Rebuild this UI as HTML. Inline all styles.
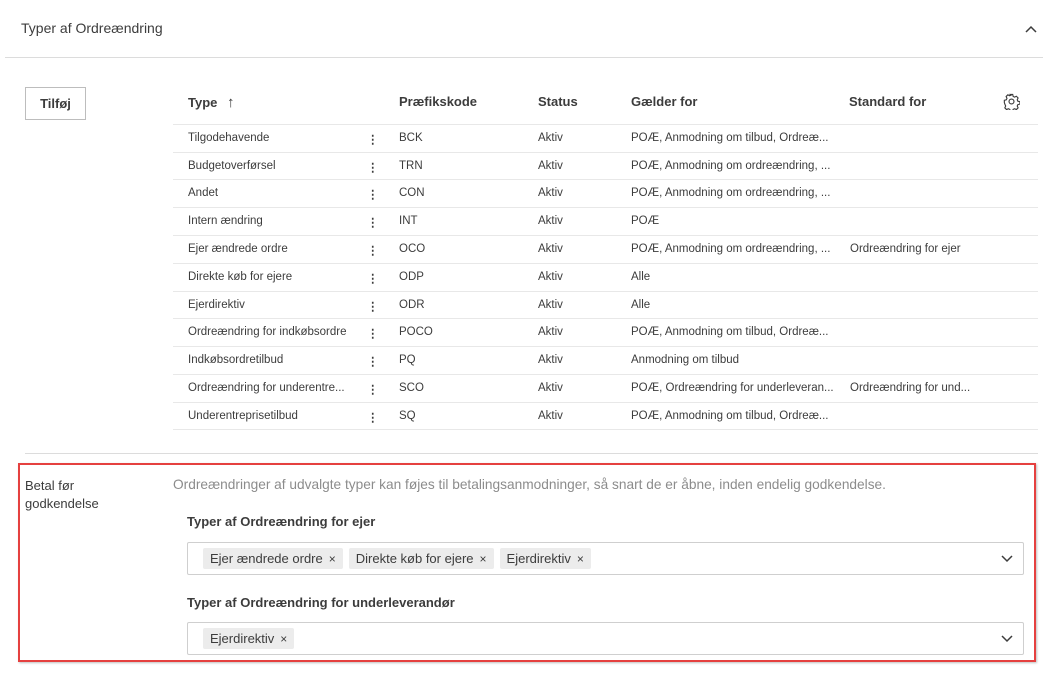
<!DOCTYPE html>
<html><head><meta charset="utf-8"><style>
*{margin:0;padding:0;box-sizing:border-box}
body{width:1050px;height:685px;background:#fff;font-family:"Liberation Sans",sans-serif;color:#3c3c3c;position:relative;overflow:hidden}
.a{position:absolute;white-space:nowrap}
.row{position:absolute;left:173px;width:865px;height:28px;border-top:1px solid #e8e8e8;font-size:11.5px;color:#3c3c3c}
.row span{position:absolute;top:7px}
.row span.d{left:194px;font-weight:bold}
.hd{position:absolute;top:94px;font-size:13px;font-weight:bold;color:#3c3c3c}
.chip{display:inline-block;background:#ececec;border-radius:2px;height:21px;line-height:21px;padding:0 7px;font-size:13px;color:#3c3c3c;margin-right:6px}
.chip i{font-style:normal;font-size:12px;margin-left:6px}
.sel{position:absolute;left:187px;width:837px;height:33px;border:1px solid #cfcfcf;border-radius:2px;padding:5px 0 0 15px}
</style></head><body>
<div class="a" style="left:21px;top:20px;font-size:14px;color:#3c3c3c">Typer af Ordreændring</div>
<svg class="a" style="left:1024px;top:24px" width="14" height="10" viewBox="0 0 14 10"><path d="M2 8 L7 3 L12 8" fill="none" stroke="#3c3c3c" stroke-width="1.5"/></svg>
<div class="a" style="left:5px;top:57px;width:1038px;height:1px;background:#dcdcdc"></div>
<div class="a" style="left:25px;top:87px;width:61px;height:33px;border:1px solid #bdbdbd;font-size:13px;font-weight:bold;text-align:center;line-height:31px">Tilføj</div>
<div class="hd" style="left:188px">Type <span style="font-weight:normal;font-size:15px;margin-left:6px">↑</span></div>
<div class="hd" style="left:399px">Præfikskode</div>
<div class="hd" style="left:538px">Status</div>
<div class="hd" style="left:631px">Gælder for</div>
<div class="hd" style="left:849px">Standard for</div>
<svg class="a" style="left:1003px;top:93px" width="17" height="17" viewBox="0 0 24 24"><path d="M10.3 2h3.4l.6 2.8 2 1 2.6-1.2 2.4 2.4-1.2 2.6.9 2 2.9.7v3.4l-2.9.7-.9 2 1.2 2.6-2.4 2.4-2.6-1.2-2 .9-.6 2.9h-3.4l-.7-2.9-2-.9-2.6 1.2-2.4-2.4 1.2-2.6-.9-2L1.9 13.7v-3.4l2.8-.7.9-2-1.2-2.6 2.4-2.4 2.6 1.2 2-.9z" fill="none" stroke="#3c3c3c" stroke-width="1.6"/><circle cx="12" cy="12" r="3.5" fill="none" stroke="#3c3c3c" stroke-width="1.6"/></svg>
<div class="row" style="top:124px"><span style="left:15px">Tilgodehavende</span><span class="d">⋮</span><span style="left:226px">BCK</span><span style="left:365px">Aktiv</span><span style="left:458px">POÆ, Anmodning om tilbud, Ordreæ...</span></div>
<div class="row" style="top:152px"><span style="left:15px">Budgetoverførsel</span><span class="d">⋮</span><span style="left:226px">TRN</span><span style="left:365px">Aktiv</span><span style="left:458px">POÆ, Anmodning om ordreændring, ...</span></div>
<div class="row" style="top:179px"><span style="left:15px">Andet</span><span class="d">⋮</span><span style="left:226px">CON</span><span style="left:365px">Aktiv</span><span style="left:458px">POÆ, Anmodning om ordreændring, ...</span></div>
<div class="row" style="top:207px"><span style="left:15px">Intern ændring</span><span class="d">⋮</span><span style="left:226px">INT</span><span style="left:365px">Aktiv</span><span style="left:458px">POÆ</span></div>
<div class="row" style="top:235px"><span style="left:15px">Ejer ændrede ordre</span><span class="d">⋮</span><span style="left:226px">OCO</span><span style="left:365px">Aktiv</span><span style="left:458px">POÆ, Anmodning om ordreændring, ...</span><span style="left:677px">Ordreændring for ejer</span></div>
<div class="row" style="top:263px"><span style="left:15px">Direkte køb for ejere</span><span class="d">⋮</span><span style="left:226px">ODP</span><span style="left:365px">Aktiv</span><span style="left:458px">Alle</span></div>
<div class="row" style="top:291px"><span style="left:15px">Ejerdirektiv</span><span class="d">⋮</span><span style="left:226px">ODR</span><span style="left:365px">Aktiv</span><span style="left:458px">Alle</span></div>
<div class="row" style="top:318px"><span style="left:15px">Ordreændring for indkøbsordre</span><span class="d">⋮</span><span style="left:226px">POCO</span><span style="left:365px">Aktiv</span><span style="left:458px">POÆ, Anmodning om tilbud, Ordreæ...</span></div>
<div class="row" style="top:346px"><span style="left:15px">Indkøbsordretilbud</span><span class="d">⋮</span><span style="left:226px">PQ</span><span style="left:365px">Aktiv</span><span style="left:458px">Anmodning om tilbud</span></div>
<div class="row" style="top:374px"><span style="left:15px">Ordreændring for underentre...</span><span class="d">⋮</span><span style="left:226px">SCO</span><span style="left:365px">Aktiv</span><span style="left:458px">POÆ, Ordreændring for underleveran...</span><span style="left:677px">Ordreændring for und...</span></div>
<div class="row" style="top:402px;border-bottom:1px solid #e8e8e8"><span style="left:15px">Underentreprisetilbud</span><span class="d">⋮</span><span style="left:226px">SQ</span><span style="left:365px">Aktiv</span><span style="left:458px">POÆ, Anmodning om tilbud, Ordreæ...</span></div>
<div class="a" style="left:25px;top:453px;width:1013px;height:1px;background:#dcdcdc"></div>
<div class="a" style="left:18px;top:463px;width:1018px;height:199px;border:2px solid #e5403f;box-shadow:1px 1px 2px rgba(0,0,0,.25)"></div>
<div class="a" style="left:25px;top:477px;font-size:13px;line-height:18px;color:#3c3c3c">Betal før<br>godkendelse</div>
<div class="a" style="left:173px;top:477px;font-size:13.7px;color:#8c8c8c">Ordreændringer af udvalgte typer kan føjes til betalingsanmodninger, så snart de er åbne, inden endelig godkendelse.</div>
<div class="a" style="left:187px;top:514px;font-size:13px;font-weight:bold">Typer af Ordreændring for ejer</div>
<div class="sel" style="top:542px"><span class="chip">Ejer ændrede ordre<i>×</i></span><span class="chip">Direkte køb for ejere<i>×</i></span><span class="chip">Ejerdirektiv<i>×</i></span></div>
<svg class="a" style="left:1000px;top:554px" width="14" height="10" viewBox="0 0 14 10"><path d="M2 2 L7 7 L12 2" fill="none" stroke="#3c3c3c" stroke-width="1.5"/></svg>
<div class="a" style="left:187px;top:595px;font-size:13px;font-weight:bold">Typer af Ordreændring for underleverandør</div>
<div class="sel" style="top:622px"><span class="chip">Ejerdirektiv<i>×</i></span></div>
<svg class="a" style="left:1000px;top:634px" width="14" height="10" viewBox="0 0 14 10"><path d="M2 2 L7 7 L12 2" fill="none" stroke="#3c3c3c" stroke-width="1.5"/></svg>
</body></html>
